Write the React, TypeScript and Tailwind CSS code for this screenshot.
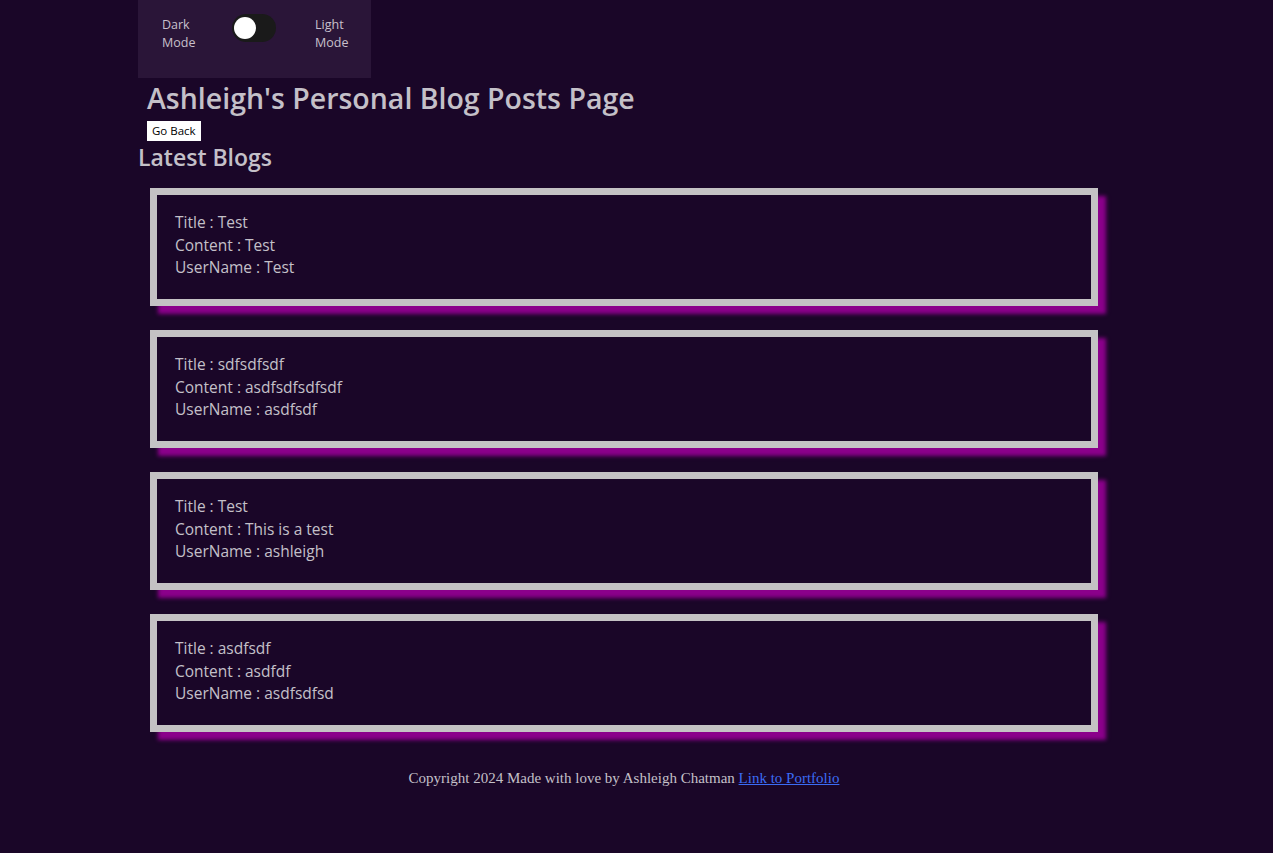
import React from 'react';

const posts = [
  { title: 'Test', content: 'Test', user: 'Test' },
  { title: 'sdfsdfsdf', content: 'asdfsdfsdfsdf', user: 'asdfsdf' },
  { title: 'Test', content: 'This is a test', user: 'ashleigh' },
  { title: 'asdfsdf', content: 'asdfdf', user: 'asdfsdfsd' },
];

export default function App() {
  return (
    <div className="min-h-[853px] bg-[#1a0628] text-[#c4c0c8]" style={{ fontFamily: '"Open Sans", "DejaVu Sans", sans-serif' }}>
      <div className="ml-[138px] w-[972px]">
        {/* Theme toggle */}
        <div className="flex h-[78px] w-[233px] items-start bg-[#2a1538] pl-6 pt-[16px] text-[12.5px] leading-[18px] text-[#c8c0cc]">
          <div className="w-[70px]">Dark<br />Mode</div>
          <div className="mt-[-2px] flex h-[28px] w-[44px] items-center rounded-full bg-[#1a1a1a] px-[2px]">
            <div className="h-[22px] w-[22px] rounded-full bg-white" />
          </div>
          <div className="ml-[39px]">Light<br />Mode</div>
        </div>

        <h1 className="ml-[9px] mt-[1px] text-[28.5px] font-semibold leading-[38px]">Ashleigh's Personal Blog Posts Page</h1>
        <button className="ml-[9px] mt-[3px] h-[20px] bg-white px-[5px] text-[11.5px] leading-[20px] text-black">Go Back</button>
        <h2 className="mt-[1px] text-[23px] font-semibold leading-[30px]">Latest Blogs</h2>

        {/* Blog list */}
        <div className="mt-[16px] flex flex-col gap-[24px] px-[12px]">
          {posts.map((p, i) => (
            <div key={i} className="h-[118px] border-[7px] border-[#c4c2c4] bg-[#1a0628] pl-[18px] pt-[16px] text-[15.5px] leading-[22.5px] shadow-[8px_8px_4px_#8b008b]">
              <div>Title : {p.title}</div>
              <div>Content : {p.content}</div>
              <div>UserName : {p.user}</div>
            </div>
          ))}
        </div>

        <p className="mt-[35px] text-center text-[15px]" style={{ fontFamily: '"Liberation Serif", "Times New Roman", serif' }}>
          Copyright 2024 Made with love by Ashleigh Chatman{' '}
          <a href="#" className="text-[#3b6cf5] underline">Link to Portfolio</a>
        </p>
      </div>
    </div>
  );
}
